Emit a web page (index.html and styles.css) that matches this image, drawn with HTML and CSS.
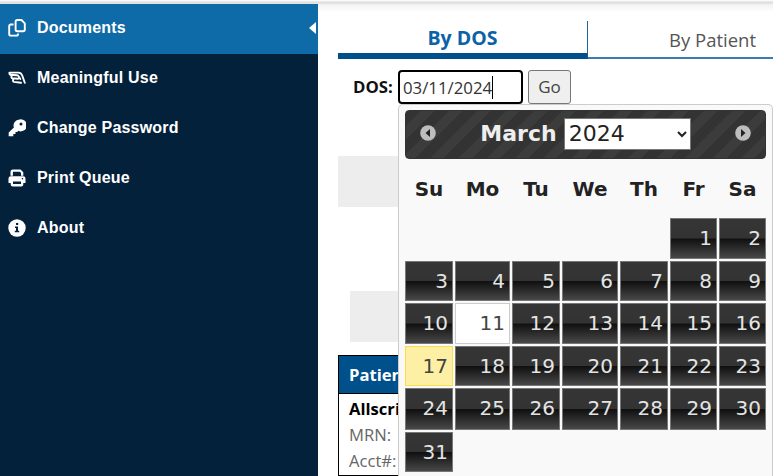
FILE: index.html
```html
<!DOCTYPE html>
<html lang="en">
<head>
  <meta charset="UTF-8">
  <title>Documents</title>
  <link rel="stylesheet" href="styles.css">
</head>
<body>

  <div class="topbar"></div>
  <div class="page">
    <nav class="sidebar">
      <a class="nav-item active">
        <svg class="icon" viewBox="0 0 18 18" fill="none" stroke="#fff" stroke-width="1.900" stroke-linejoin="round"><path d="M9.300 1h4.200l3.300 3.300V10.500q0 1.700-1.700 1.700H9.300q-1.700 0-1.700-1.700V2.700Q7.600 1 9.300 1z"/><path d="M5.500 5.500H2.900Q1.200 5.500 1.200 7.200v7.700q0 1.700 1.700 1.700h5.400q1.700 0 1.700-1.700v-.5"/></svg>
        <span>Documents</span>
        <svg class="caret" viewBox="0 0 7 12"><path d="M7 0v12L0 6z" fill="#fff"/></svg>
      </a>
      <a class="nav-item">
        <svg class="icon" viewBox="0 0 18 18" fill="none" stroke="#fff" stroke-width="1.900" stroke-linecap="round" stroke-linejoin="round"><path d="M9 6.300L2.500 5.800Q1.300 5.500 1.400 3.600H10.500Q13 3.600 14.200 6.500L16.800 13.800"/><path d="M4 6.200Q2.600 9 4.500 9.300L10 9.800M5.500 9.600Q4.300 12.300 6 12.900L13 13.800M10 6.500L12.300 10"/></svg>
        <span>Meaningful Use</span>
      </a>
      <a class="nav-item">
        <svg class="icon" viewBox="0 0 18 18"><path d="M11.500.5a6 6 0 0 0-5.600 8L.7 13.600v3.700h4.600v-2.200h2.200v-2.200h1.800l1-1.100A6 6 0 1 0 11.500.5zM13 3.500a1.500 1.500 0 1 1 0 3 1.500 1.500 0 0 1 0-3z" fill="#fff" fill-rule="evenodd"/></svg>
        <span>Change Password</span>
      </a>
      <a class="nav-item">
        <svg class="icon" viewBox="0 0 18 18"><path d="M2.500 6.800V3Q2.500.5 5 .5h7.500L15.300 3.300V6.800H13V4l-1.200-1.200H4.900v4zM2.800 7.300h12.400q2.300 0 2.300 2.300V14H15.300v1.500q0 2-2 2H4.700q-2 0-2-2V14H.5V9.600q0-2.300 2.300-2.300zM5 12.500v2.600h8v-2.600zM14.500 9a.8.8 0 1 0 0 1.600.8.8 0 0 0 0-1.600z" fill="#fff" fill-rule="evenodd"/></svg>
        <span>Print Queue</span>
      </a>
      <a class="nav-item">
        <svg class="icon" viewBox="0 0 18 18"><circle cx="9" cy="9" r="8.700" fill="#fff"/><path d="M8 4h2.200v2H8zM7 7.500h3v4.300h1.200v1.500H6.800v-1.500H8V9H7z" fill="#04213b"/></svg>
        <span>About</span>
      </a>
    </nav>

    <main class="content">
      <div class="tabs">
        <div class="tab selected">By DOS</div>
        <div class="tab">By Patient</div>
      </div>

      <div class="search">
        <label for="dos">DOS:</label>
        <div class="dos-field">
          <div class="dos-input" id="dos">03/11/2024<span class="cursor"></span></div>

          <div class="datepicker">
            <div class="dp-header">
              <svg class="dp-arrow" viewBox="0 0 16 16"><circle cx="8" cy="8" r="7.800" fill="#bdbdbd"/><path d="M10 4v8L5.500 8z" fill="#222"/></svg>
              <div class="dp-title">
                <span>March</span>
                <select><option>2024</option></select>
              </div>
              <svg class="dp-arrow" viewBox="0 0 16 16"><circle cx="8" cy="8" r="7.800" fill="#bdbdbd"/><path d="M6 4v8l4.500-4z" fill="#222"/></svg>
            </div>
            <div class="dp-week">
              <span>Su</span><span>Mo</span><span>Tu</span><span>We</span><span>Th</span><span>Fr</span><span>Sa</span>
            </div>
            <div class="dp-days">
              <a class="day first">1</a><a class="day">2</a>
              <a class="day">3</a><a class="day">4</a><a class="day">5</a><a class="day">6</a><a class="day">7</a><a class="day">8</a><a class="day">9</a>
              <a class="day">10</a><a class="day chosen">11</a><a class="day">12</a><a class="day">13</a><a class="day">14</a><a class="day">15</a><a class="day">16</a>
              <a class="day today">17</a><a class="day">18</a><a class="day">19</a><a class="day">20</a><a class="day">21</a><a class="day">22</a><a class="day">23</a>
              <a class="day">24</a><a class="day">25</a><a class="day">26</a><a class="day">27</a><a class="day">28</a><a class="day">29</a><a class="day">30</a>
              <a class="day">31</a>
            </div>
          </div>
        </div>
        <button class="go">Go</button>
      </div>

      <div class="band"></div>
      <div class="band inner"></div>

      <div class="results">
        <div class="results-head">Patient</div>
        <div class="result">
          <div class="name">Allscripts</div>
          <div>MRN:</div>
          <div>Acct#:</div>
        </div>
      </div>
    </main>
  </div>

</body>
</html>
```

FILE: styles.css
```css
* {
  box-sizing: border-box;
}

body {
  margin: 0;
  height: 476px;
  overflow: hidden;
  background: #fff;
  font-family: "Open Sans", "Noto Sans", sans-serif;
}

.topbar {
  height: 4px;
  background: linear-gradient(#fff 0, #f4f4f4 1px, #dedede 2px, #e4e4e4 4px);
}

.page {
  display: flex;
  height: 472px;
}

/* left menu */
.sidebar {
  width: 318px;
  flex: none;
  background: #04213b;
  font-family: "Liberation Sans", Arial, sans-serif;
}

.nav-item {
  display: flex;
  align-items: center;
  height: 50px;
  padding: 0 0 2px 8px;
  color: #fff;
  font-size: 16px;
  font-weight: bold;
  letter-spacing: 0.2px;
}

.nav-item.active {
  background: #0f6aa8;
}

.icon {
  width: 18px;
  height: 18px;
  margin-right: 11px;
}

.caret {
  width: 7px;
  height: 12px;
  margin-left: auto;
  margin-right: 2px;
}

/* right side */
.content {
  flex: 1;
  min-width: 0;
  padding-left: 20px;
  background: linear-gradient(#f1f1f1, #fff 8px);
}

.tabs {
  display: flex;
  height: 55px;
  padding-top: 17px;
}

.tab {
  flex: 1;
  padding: 6px 0 0 81px;
  border-bottom: 2px solid #3a7cae;
  color: #555;
  font-size: 18.5px;
  line-height: 26px;
  white-space: nowrap;
}

.tab.selected {
  flex: 0 0 250px;
  padding: 4px 0 0;
  border-right: 1px solid #1f679f;
  border-bottom: 6px solid #00508c;
  color: #0b62a6;
  font-size: 19.5px;
  font-weight: bold;
  text-align: center;
}

.search {
  display: flex;
  height: 97px;
  padding: 11px 0 0 15px;
  font-size: 16.8px;
}

.search label {
  width: 45px;
  color: #111;
  font-weight: bold;
  line-height: 34px;
}

.dos-field {
  position: relative;
  width: 125px;
  height: 34px;
}

.dos-input {
  display: flex;
  align-items: center;
  height: 34px;
  padding-left: 3px;
  border: 2px solid #000;
  border-radius: 4px;
  background: #fff;
  color: #333;
}

.cursor {
  width: 1px;
  height: 23px;
  background: #000;
}

.go {
  width: 43px;
  height: 34px;
  margin-left: 5px;
  padding: 0 0 1px;
  border: 1px solid #777;
  border-radius: 3px;
  background: #efefef;
  color: #444;
  font: 17px "Open Sans", sans-serif;
}

.band {
  height: 51px;
  background: #ededed;
}

.band.inner {
  margin: 84px 0 0 12px;
}

.results {
  height: 121px;
  margin-top: 13px;
  border: 1px solid #000;
  font-size: 16.6px;
}

.results-head {
  height: 38px;
  padding-left: 10px;
  border-bottom: 1px solid #000;
  background: #00508c;
  color: #fff;
  font-weight: bold;
  line-height: 38px;
}

.result {
  padding: 2px 0 0 10px;
  color: #666;
  line-height: 26px;
}

.result .name {
  color: #000;
  font-weight: bold;
}

/* calendar popup */
.datepicker {
  position: absolute;
  top: 34px;
  left: 0;
  width: 375px;
  height: 372px;
  padding: 5px 6px 0;
  border: 1px solid #ccc;
  border-bottom: 0;
  border-radius: 5px 5px 0 0;
  background: #f9f9f9;
  font-family: "DejaVu Sans", Verdana, sans-serif;
}

.dp-header {
  display: flex;
  align-items: center;
  justify-content: space-between;
  width: 361px;
  height: 49px;
  padding: 0 14px 4px;
  border: 1px solid #333;
  border-radius: 4px;
  background: repeating-linear-gradient(135deg, #333 0, #333 10px, #3c3c3c 11px, #3c3c3c 20px);
}

.dp-arrow {
  width: 16px;
  height: 16px;
}

.dp-title {
  display: flex;
  align-items: center;
  gap: 7px;
  padding-top: 2px;
  color: #eee;
  font-size: 22px;
  font-weight: bold;
}

.dp-title select {
  width: 127px;
  height: 32px;
  border: 1px solid #777;
  border-radius: 0;
  background: #fff;
  color: #222;
  font: 22px "DejaVu Sans", Verdana, sans-serif;
}

.dp-week,
.dp-days {
  display: grid;
  grid-template-columns: 48px 55px 48px 56px 48px 47px 47px;
  column-gap: 2px;
}

.dp-week {
  height: 59px;
  color: #222;
  font-size: 20px;
  font-weight: bold;
  line-height: 60px;
  text-align: center;
}

.dp-days {
  grid-template-rows: 41px 40px 41px 40px 42px 40px;
  row-gap: 2px;
}

.day {
  padding-right: 4px;
  border: 1px solid #777;
  background: linear-gradient(#353535 0, #333 49%, #101010 51%, #484848 100%);
  color: #e4e4e4;
  font-size: 20px;
  line-height: 39px;
  text-align: right;
}

.day.first {
  grid-column: 6;
}

.day.chosen {
  border-color: #ccc;
  background: #fff;
  color: #444;
}

.day.today {
  border: 1px solid #fcdc4b;
  background: #fdf0a5;
  color: #444;
}
```
